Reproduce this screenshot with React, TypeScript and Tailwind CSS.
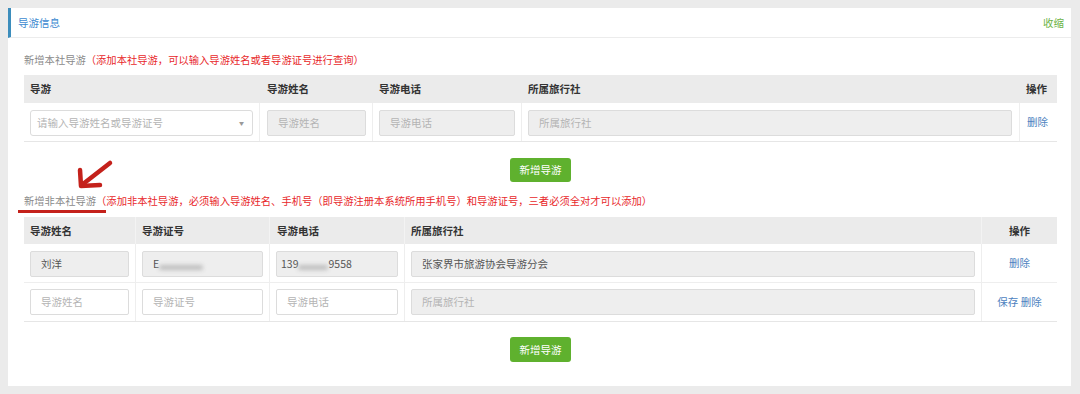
import React from "react";

const font = { fontFamily: '"Noto Sans CJK SC", "Noto Sans", sans-serif' };

function Input({ text, placeholder, disabled }: { text?: React.ReactNode; placeholder?: string; disabled?: boolean }) {
  return (
    <div
      className={`h-[26px] w-full rounded-[2px] border border-[#dcdcdc] flex items-center px-[10px] text-[10.5px] ${
        disabled ? "bg-[#eeeeee]" : "bg-white"
      }`}
    >
      {text ? <span className="text-[#555]">{text}</span> : <span className="text-[#b4b4b4]">{placeholder}</span>}
    </div>
  );
}

function Blur({ w }: { w: number }) {
  return <span className="inline-block h-[5px] rounded-full bg-[#bdbdbd] blur-[2px] mt-[6px]" style={{ width: w }} />;
}

export default function App() {
  return (
    <div className="relative min-h-[394px] w-[1080px] bg-[#ebebeb] pt-[8px] pl-[8px]" style={font}>
      <div className="w-[1063px] h-[378px] bg-white">
        {/* header */}
        <div className="flex items-center justify-between h-[30px] border-l-[3px] border-l-[#3c8dbc] border-b border-b-[#ececec] pl-[7px] pr-[7px]">
          <span className="text-[10.5px] text-[#3d8ad0]">导游信息</span>
          <span className="text-[10.5px] text-[#6cb345]">收缩</span>
        </div>

        <div className="pl-[16px] pt-[14px]">
          {/* section 1 label */}
          <div className="h-[16px] flex items-center text-[10.3px] leading-none">
            <span className="text-[#8a8a8a]">新增本社导游</span>
            <span className="text-[#e8282b]">（添加本社导游，可以输入导游姓名或者导游证号进行查询）</span>
          </div>

          {/* table 1 */}
          <div className="mt-[7px] w-[1033px] border-b border-[#e6e6e6]">
            <div className="grid grid-cols-[236px_113px_149px_498px_37px] h-[28px] bg-[#ebebeb] text-[10.5px] font-bold text-[#333]">
              <div className="flex items-center pl-[6px]">导游</div>
              <div className="flex items-center pl-[7px]">导游姓名</div>
              <div className="flex items-center pl-[6px]">导游电话</div>
              <div className="flex items-center pl-[6px]">所属旅行社</div>
              <div className="flex items-center pl-[6px]">操作</div>
            </div>
            <div className="grid grid-cols-[236px_113px_149px_498px_37px] h-[38px]">
              <div className="border-r border-[#eeeeee] px-[6px] pt-[7px]">
                <div className="h-[26px] w-full rounded-[3px] border border-[#dcdcdc] flex items-center justify-between pl-[6px] pr-[8px] text-[10.5px]">
                  <span className="text-[#b4b4b4]">请输入导游姓名或导游证号</span>
                  <span className="text-[#999] text-[5px]">▼</span>
                </div>
              </div>
              <div className="border-r border-[#eeeeee] pl-[7px] pr-[6px] pt-[7px]">
                <Input placeholder="导游姓名" disabled />
              </div>
              <div className="border-r border-[#eeeeee] px-[6px] pt-[7px]">
                <Input placeholder="导游电话" disabled />
              </div>
              <div className="border-r border-[#eeeeee] pl-[6px] pr-[7px] pt-[7px]">
                <Input placeholder="所属旅行社" disabled />
              </div>
              <div className="flex items-center pl-[7px] text-[10.5px] text-[#4d82c0]">删除</div>
            </div>
          </div>

          {/* button 1 */}
          <div className="w-[1033px] flex justify-center mt-[16px]">
            <div className="w-[61px] h-[24px] rounded-[3px] bg-[#5fb12e] text-white text-[10.5px] flex items-center justify-center">
              新增导游
            </div>
          </div>

          {/* section 2 label */}
          <div className="mt-[11px] h-[16px] flex items-center text-[10.3px] leading-none">
            <span className="text-[#8a8a8a]">新增非本社导游</span>
            <span className="text-[#e8282b]">（添加非本社导游，必须输入导游姓名、手机号（即导游注册本系统所用手机号）和导游证号，三者必须全对才可以添加）</span>
          </div>

          {/* table 2 */}
          <div className="mt-[8px] w-[1033px] border-b border-[#e6e6e6]">
            <div className="grid grid-cols-[112px_134px_135px_577px_75px] h-[27px] bg-[#ebebeb] text-[10.5px] font-bold text-[#333]">
              <div className="flex items-center pl-[6px] border-r border-[#f3f3f3]">导游姓名</div>
              <div className="flex items-center pl-[6px] border-r border-[#f3f3f3]">导游证号</div>
              <div className="flex items-center pl-[7px] border-r border-[#f3f3f3]">导游电话</div>
              <div className="flex items-center pl-[6px] border-r border-[#f3f3f3]">所属旅行社</div>
              <div className="flex items-center justify-center">操作</div>
            </div>
            <div className="grid grid-cols-[112px_134px_135px_577px_75px] h-[39px] border-b border-[#eeeeee]">
              <div className="border-r border-[#eeeeee] px-[6px] pt-[7px]">
                <Input text="刘洋" disabled />
              </div>
              <div className="border-r border-[#eeeeee] px-[6px] pt-[7px]">
                <div className="h-[26px] w-full rounded-[2px] border border-[#dcdcdc] bg-[#eeeeee] flex items-center pl-[10px] text-[10.5px] text-[#555]">
                  <span>E</span>
                  <Blur w={44} />
                </div>
              </div>
              <div className="border-r border-[#eeeeee] px-[6px] pt-[7px]">
                <div className="h-[26px] w-full rounded-[2px] border border-[#dcdcdc] bg-[#eeeeee] flex items-center pl-[4px] text-[10.5px] text-[#555]">
                  <span>139</span>
                  <Blur w={30} />
                  <span>9558</span>
                </div>
              </div>
              <div className="border-r border-[#eeeeee] pl-[6px] pr-[6px] pt-[7px]">
                <Input text="张家界市旅游协会导游分会" disabled />
              </div>
              <div className="flex items-center justify-center text-[10.5px] text-[#4d82c0]">删除</div>
            </div>
            <div className="grid grid-cols-[112px_134px_135px_577px_75px] h-[38px]">
              <div className="border-r border-[#eeeeee] px-[6px] pt-[6px]">
                <Input placeholder="导游姓名" />
              </div>
              <div className="border-r border-[#eeeeee] px-[6px] pt-[6px]">
                <Input placeholder="导游证号" />
              </div>
              <div className="border-r border-[#eeeeee] px-[6px] pt-[6px]">
                <Input placeholder="导游电话" />
              </div>
              <div className="border-r border-[#eeeeee] pl-[6px] pr-[6px] pt-[6px]">
                <Input placeholder="所属旅行社" disabled />
              </div>
              <div className="flex items-center justify-center text-[10.5px] text-[#4d82c0]">保存 删除</div>
            </div>
          </div>

          {/* button 2 */}
          <div className="w-[1033px] flex justify-center mt-[15px]">
            <div className="w-[61px] h-[25px] rounded-[3px] bg-[#5fb12e] text-white text-[10.5px] flex items-center justify-center">
              新增导游
            </div>
          </div>
        </div>
      </div>

      {/* annotation overlay */}
      <svg className="absolute left-0 top-0 pointer-events-none" width="1080" height="394">
        <line x1="110" y1="163" x2="83" y2="184" stroke="#c4211b" strokeWidth="4.5" strokeLinecap="round" />
        <polyline points="80,170 81,186 100,185" fill="none" stroke="#c4211b" strokeWidth="4.5" strokeLinecap="round" strokeLinejoin="round" />
        <rect x="18" y="210" width="88" height="3" fill="#c4211b" />
      </svg>
    </div>
  );
}
